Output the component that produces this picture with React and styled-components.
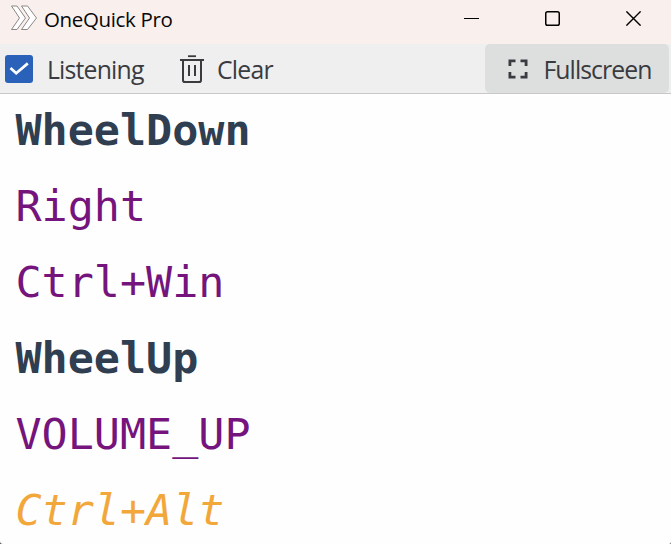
import React from "react";
import styled, { createGlobalStyle } from "styled-components";

const GlobalStyle = createGlobalStyle`
  * { box-sizing: border-box; }
  body { margin: 0; background: #55585a; overflow: hidden; }
`;

const Window = styled.div`
  width: 671px;
  height: 544px;
  display: flex;
  flex-direction: column;
  overflow: hidden;
  background: #fefefe;
  border-radius: 0 0 2px 3px;
  font-family: "Open Sans", "Noto Sans", sans-serif;
`;

const TitleBar = styled.header`
  flex: none;
  height: 44px;
  display: flex;
  align-items: flex-start;
  background: #f9f0ed;
  padding-left: 10px;
`;

const Logo = styled.svg`
  flex: none;
  width: 28px;
  height: 26px;
  margin-top: 5px;
`;

const Title = styled.h1`
  margin: 0 auto 0 6px;
  font-size: 20.5px;
  font-weight: 400;
  line-height: 39px;
  letter-spacing: -0.35px;
  color: #080808;
  white-space: nowrap;
`;

const CaptionButton = styled.button`
  flex: none;
  width: 81px;
  height: 37px;
  padding: 0;
  border: 0;
  background: transparent;
  display: flex;
  align-items: center;
  justify-content: center;
  margin-right: ${(p) => (p.$last ? "-3px" : "0")};
`;

const Toolbar = styled.div`
  flex: none;
  height: 50px;
  display: flex;
  align-items: stretch;
  background: #efefef;
  border-bottom: 1px solid #c8c8c8;
  padding: 0 2px 0 5px;
`;

const Tool = styled.button`
  flex: none;
  display: flex;
  align-items: center;
  border: 0;
  padding: 0;
  width: ${(p) => (p.$width ? `${p.$width}px` : "auto")};
  background: transparent;
`;

const FullscreenTool = styled(Tool)`
  width: 184px;
  margin-left: auto;
  padding-left: 23px;
  border-radius: 5px;
  background: #dddfde;
`;

const CheckBox = styled.span`
  width: 28px;
  height: 28px;
  display: flex;
  border-radius: 3px;
  background: #2962b8;
`;

const Label = styled.span`
  margin-left: ${(p) => p.$gap}px;
  font-family: "Open Sans", "Noto Sans", sans-serif;
  font-size: 24.8px;
  line-height: 36px;
  letter-spacing: ${(p) => p.$spacing}px;
  color: #3a3b40;
  white-space: nowrap;
`;

const KeyLog = styled.ul`
  flex: 1;
  margin: 0;
  padding: 0 0 0 15.5px;
  list-style: none;
`;

const tones = {
  wheel: "#2f3e50",
  key: "#75147c",
  active: "#f2a73b",
};

const KeyEntry = styled.li`
  height: 76.1px;
  line-height: 72px;
  font-family: "DejaVu Sans Mono", monospace;
  font-size: 43.4px;
  font-weight: ${(p) => (p.$tone === "wheel" ? 700 : 400)};
  font-style: ${(p) => (p.$tone === "active" ? "italic" : "normal")};
  color: ${(p) => tones[p.$tone]};
  white-space: pre;
`;

const entries = [
  { text: "WheelDown", tone: "wheel" },
  { text: "Right", tone: "key" },
  { text: "Ctrl+Win", tone: "key" },
  { text: "WheelUp", tone: "wheel" },
  { text: "VOLUME_UP", tone: "key" },
  { text: "Ctrl+Alt", tone: "active" },
];

export default function App() {
  return (
    <>
      <GlobalStyle />
      <Window>
        <TitleBar>
          <Logo viewBox="0 0 28 26" fill="#fff" stroke="#8b8786" strokeWidth="1">
            <path d="M1.5 1H7L15.5 13L7 24.5H1.5L9.5 13Z" />
            <path d="M11.5 1H17.5L26.5 13L17.5 24.5H11.5L19.5 13Z" />
          </Logo>
          <Title>OneQuick Pro</Title>
          <CaptionButton aria-label="Minimize">
            <svg width="15" height="15" stroke="#000" fill="none">
              <path d="M0 7.5H15" />
            </svg>
          </CaptionButton>
          <CaptionButton aria-label="Maximize">
            <svg width="15" height="15" stroke="#000" strokeWidth="1.5" fill="none">
              <rect x="0.75" y="0.75" width="13.5" height="13.5" rx="1.8" />
            </svg>
          </CaptionButton>
          <CaptionButton aria-label="Close" $last>
            <svg width="15" height="15" stroke="#000" strokeWidth="1.4" fill="none">
              <path d="M0.4 0.4L14.6 14.6M14.6 0.4L0.4 14.6" />
            </svg>
          </CaptionButton>
        </TitleBar>
        <Toolbar>
          <Tool $width={175}>
            <CheckBox>
              <svg width="28" height="28" fill="none" stroke="#fff" strokeWidth="2.7">
                <path d="M5.5 13L11.2 18.2L22.8 8.4" />
              </svg>
            </CheckBox>
            <Label $gap={14} $spacing={-0.82}>Listening</Label>
          </Tool>
          <Tool>
            <svg width="24" height="28" fill="none" stroke="#3a3b3f" strokeWidth="2">
              <path d="M8 1.2H16" strokeWidth="1.8" />
              <path d="M0 5H24" />
              <path d="M3 5V25.2Q3 27 4.8 27H19.2Q21 27 21 25.2V5" />
              <path d="M9 10V21M15 10V21" />
            </svg>
            <Label $gap={13} $spacing={-0.8}>Clear</Label>
          </Tool>
          <FullscreenTool>
            <svg width="20" height="20" fill="none" stroke="#3a3b40" strokeWidth="2.8">
              <path d="M1.9 7V1.9H7.5M12.5 1.9H18.1V7M18.1 13V18.1H12.5M7.5 18.1H1.9V13" />
            </svg>
            <Label $gap={15.5} $spacing={-0.95}>Fullscreen</Label>
          </FullscreenTool>
        </Toolbar>
        <KeyLog>
          {entries.map((entry) => (
            <KeyEntry key={entry.text} $tone={entry.tone}>{entry.text}</KeyEntry>
          ))}
        </KeyLog>
      </Window>
    </>
  );
}
